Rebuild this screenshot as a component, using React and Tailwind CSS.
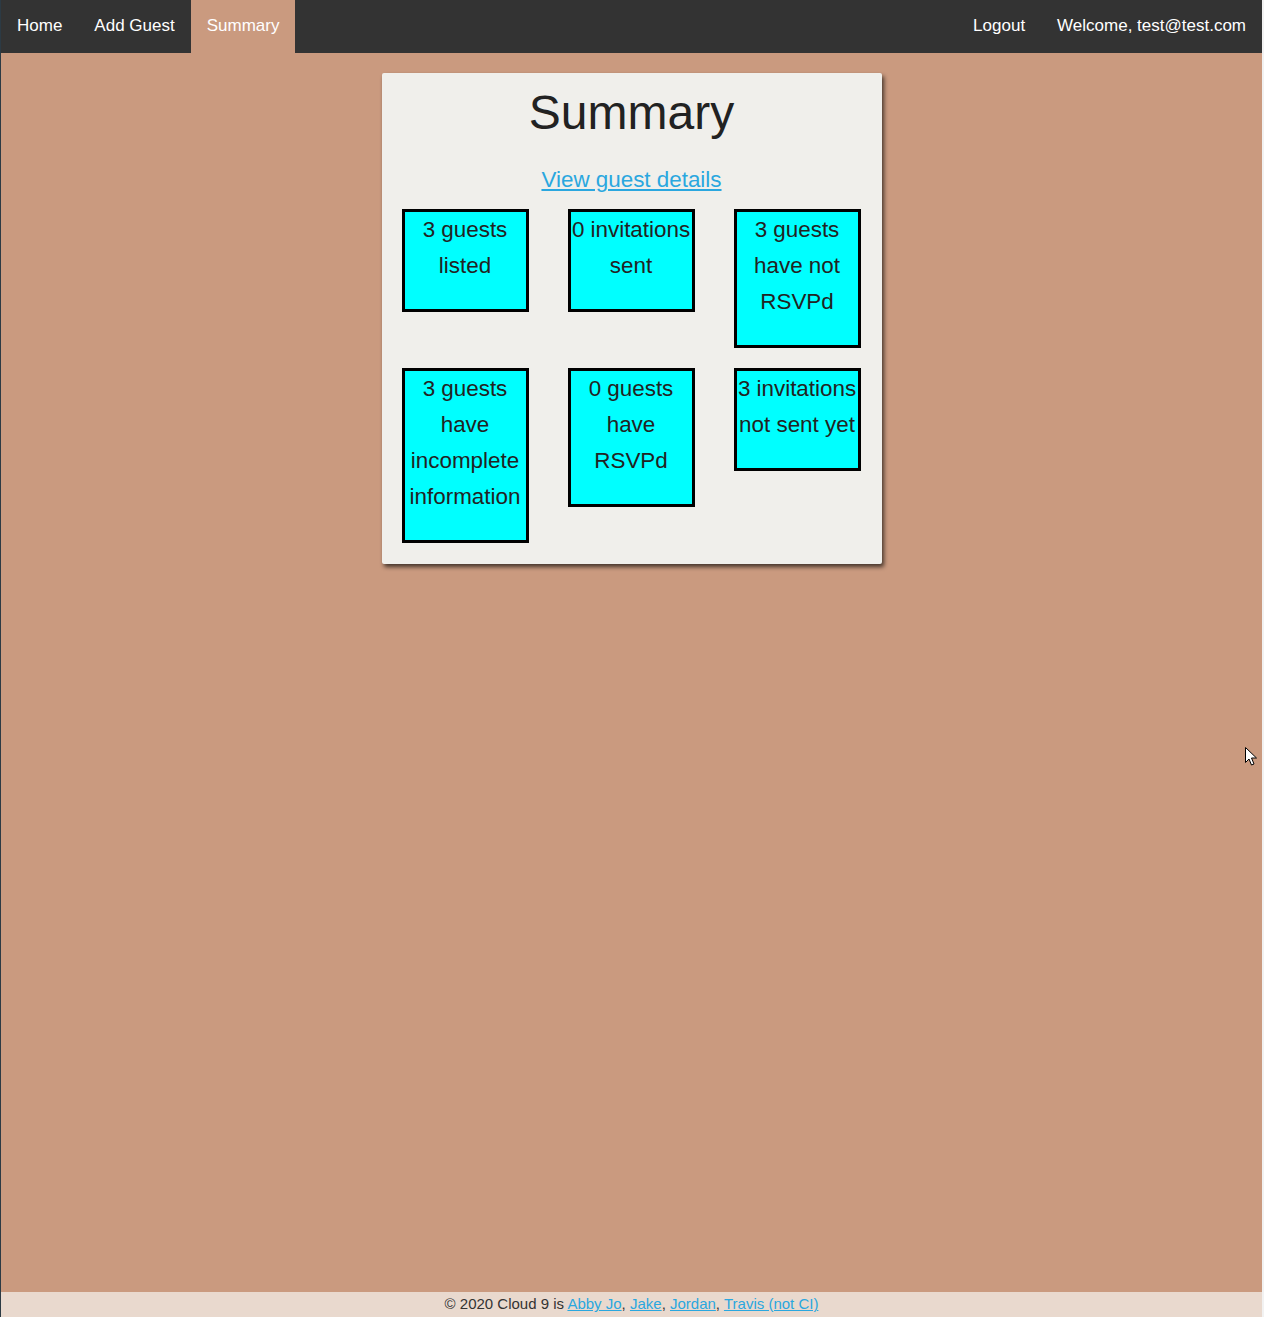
import React from "react";

// Top navigation links
const leftLinks = [
  { name: "Home", active: false },
  { name: "Add Guest", active: false },
  { name: "Summary", active: true },
];

const rightLinks = ["Logout", "Welcome, test@test.com"];

// Summary tiles, in reading order
const tileLines = [
  ["3 guests", "listed"],
  ["0 invitations", "sent"],
  ["3 guests", "have not", "RSVPd"],
  ["3 guests", "have", "incomplete", "information"],
  ["0 guests", "have", "RSVPd"],
  ["3 invitations", "not sent yet"],
];

function classNames(...classes) {
  return classes.filter(Boolean).join(" ");
}

function Navbar() {
  return (
    <nav className="flex h-[53px] items-stretch justify-between bg-[#333333] text-[17px] text-white">
      <div className="flex">
        {leftLinks.map((item) => (
          <a
            key={item.name}
            href="#"
            className={classNames(
              item.active ? "bg-[#ca9a7f]" : "",
              "flex items-center px-4 pb-[2px]"
            )}
          >
            {item.name}
          </a>
        ))}
      </div>
      <div className="flex">
        {rightLinks.map((name) => (
          <a key={name} href="#" className="flex items-center px-4 pb-[2px]">
            {name}
          </a>
        ))}
      </div>
    </nav>
  );
}

function Tile({ lines }) {
  return (
    <div className="border-[3px] border-black bg-[#00ffff] pb-[25px] text-center text-[22.4px] leading-[36px] text-[#222]">
      {lines.map((line) => (
        <div key={line} className="whitespace-nowrap">
          {line}
        </div>
      ))}
    </div>
  );
}

export default function App() {
  return (
    <div
      className="flex min-h-screen flex-col border-l border-r-2 border-l-[#2c3a44] border-r-[#f2f2f2] bg-[#ca9a7f]"
      style={{ fontFamily: '"Liberation Sans", Arial, sans-serif' }}
    >
      <Navbar />

      <main className="flex flex-1 justify-center pt-5">
        <div className="h-fit w-[500px] rounded-[2px] bg-[#f0efeb] px-5 pb-[21px] pt-3 shadow-[2px_3px_4px_rgba(0,0,0,0.65)]">
          <h1 className="text-center text-[48px] leading-[55px] text-[#222]">
            Summary
          </h1>
          <div className="mt-[27px] text-center text-[22.4px] leading-[26px]">
            <a href="#" className="text-[#2aa7df] underline">
              View guest details
            </a>
          </div>
          <div className="mt-4 grid grid-cols-[127px_127px_127px] items-start gap-x-[39px] gap-y-[20px]">
            {tileLines.map((lines) => (
              <Tile key={lines.join(" ")} lines={lines} />
            ))}
          </div>
        </div>
      </main>

      <footer className="flex h-[25px] items-center justify-center bg-[#e9d9ce] text-[15px] text-[#333]">
        <span>
          © 2020 Cloud 9 is{" "}
          <a href="#" className="text-[#2aa7df] underline">Abby Jo</a>,{" "}
          <a href="#" className="text-[#2aa7df] underline">Jake</a>,{" "}
          <a href="#" className="text-[#2aa7df] underline">Jordan</a>,{" "}
          <a href="#" className="text-[#2aa7df] underline">Travis (not CI)</a>
        </span>
      </footer>

      {/* mouse pointer captured in the screenshot */}
      <svg
        className="absolute left-[1245px] top-[747px]"
        width="13"
        height="20"
        viewBox="0 0 13 20"
      >
        <path
          d="M0.5 0.5 L0.5 15.5 L4 12 L6.5 18 L9 17 L6.5 11 L11.5 11 Z"
          fill="white"
          stroke="black"
          strokeWidth="1"
        />
      </svg>
    </div>
  );
}
